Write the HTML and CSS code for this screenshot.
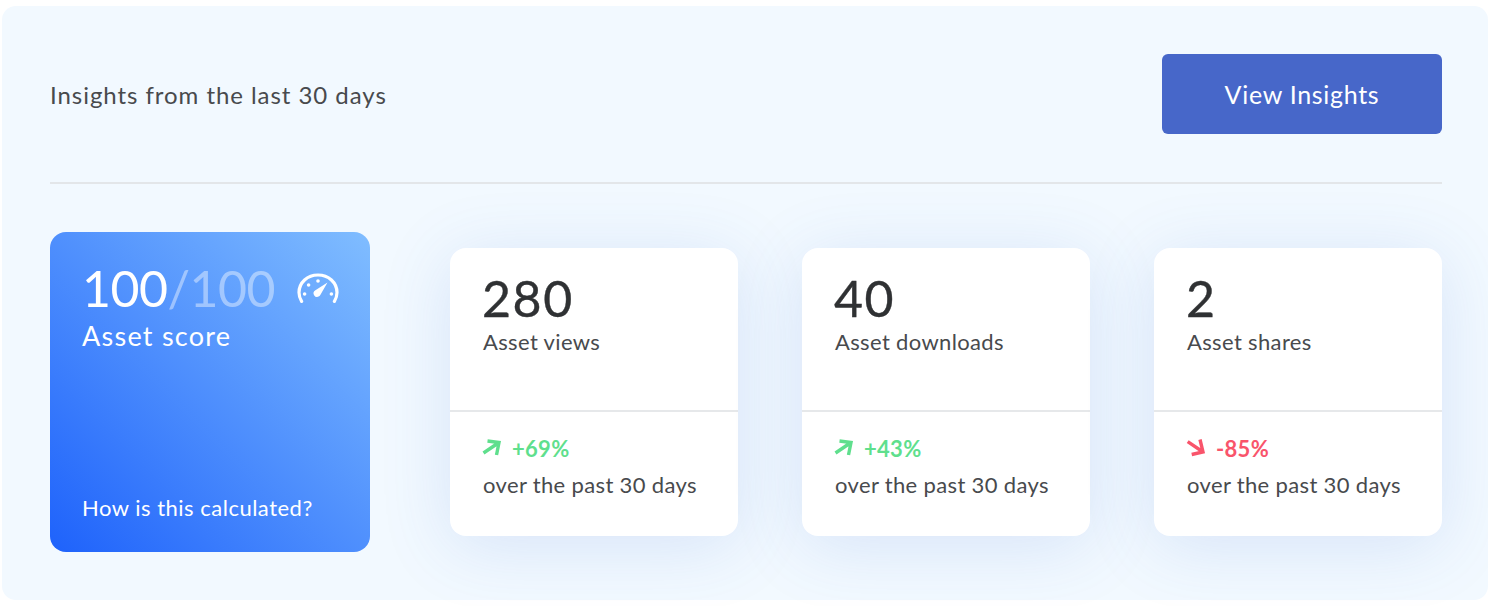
FILE: index.html
```html
<!DOCTYPE html>
<html lang="en">
  <head>
    <meta charset="UTF-8" />
    <meta name="viewport" content="width=device-width, initial-scale=1.0" />
    <title>Insights</title>
    <link rel="stylesheet" href="styles.css">
  </head>
  <body>
    <div class="panel">

      <div class="top-row">
        <p class="top-title">Insights from the last 30 days</p>
        <button class="view-but">View Insights</button>
      </div>

      <div class="cards-row">

        <div class="score-card">
          <div class="score-line">
            <span class="score-num">100<span class="score-fade">/100</span></span>
            <svg class="gauge-icon" viewBox="0 0 42 30" fill="none">
              <path d="M4.600 28.400C2.900 25.600 2 22.600 2 19.600 2 9.600 10.500 2 21 2s19 7.600 19 17.600c0 3-.9 6-2.600 8.800" stroke="#fff" stroke-width="3.200" stroke-linecap="round"/>
              <path d="M30.500 9.600 18.400 17.300a3.600 3.600 0 0 0 -1.300 4.900 3.600 3.600 0 0 0 5 1.100 3.600 3.600 0 0 0 1.200 -1.200z" fill="#fff"/>
              <circle cx="21" cy="8" r="1.800" fill="#fff"/>
              <circle cx="11.600" cy="12" r="1.800" fill="#fff"/>
              <circle cx="7.600" cy="21" r="1.800" fill="#fff"/>
              <circle cx="34.400" cy="21" r="1.800" fill="#fff"/>
            </svg>
          </div>
          <p class="score-label">Asset score</p>
          <p class="score-link">How is this calculated?</p>
        </div>

        <div class="stat-card">
          <div class="stat-top">
            <p class="stat-num">280</p>
            <p class="stat-label">Asset views</p>
          </div>
          <div class="stat-bottom">
            <p class="change up">
              <svg class="arrow-icon" viewBox="0 0 20 18" fill="none"><path d="M1.500 14 17 3.500M5.500 2 17 3.500 14.500 16" stroke="#5fdf8d" stroke-width="3.400"/></svg>
              +69%
            </p>
            <p class="stat-label">over the past 30 days</p>
          </div>
        </div>

        <div class="stat-card">
          <div class="stat-top">
            <p class="stat-num">40</p>
            <p class="stat-label">Asset downloads</p>
          </div>
          <div class="stat-bottom">
            <p class="change up">
              <svg class="arrow-icon" viewBox="0 0 20 18" fill="none"><path d="M1.500 14 17 3.500M5.500 2 17 3.500 14.500 16" stroke="#5fdf8d" stroke-width="3.400"/></svg>
              +43%
            </p>
            <p class="stat-label">over the past 30 days</p>
          </div>
        </div>

        <div class="stat-card">
          <div class="stat-top">
            <p class="stat-num">2</p>
            <p class="stat-label">Asset shares</p>
          </div>
          <div class="stat-bottom">
            <p class="change down">
              <svg class="arrow-icon" viewBox="0 0 20 18" fill="none"><path d="M1.700 2.700 17 13M14 .5 17 13 5.700 15.500" stroke="#f9546b" stroke-width="3.400"/></svg>
              -85%
            </p>
            <p class="stat-label">over the past 30 days</p>
          </div>
        </div>

      </div>
    </div>
  </body>
</html>
```

FILE: styles.css
```css
body{
  margin: 0;
  height: 606px;
  overflow: hidden;
  background-color: white;
  font-family: "Lato", "Liberation Sans", sans-serif;
  color: #484a4d;
}
p{
  margin: 0;
}
.panel{
  box-sizing: border-box;
  margin: 6px 0 0 2px;
  height: 594px;
  padding: 48px 46px 0 48px;
  background-color: #f2f9ff;
  border-radius: 14px;
}
.top-row{
  display: flex;
  justify-content: space-between;
  align-items: center;
  padding-bottom: 49px;
  box-sizing: border-box;
  height: 130px;
  border-bottom: 2px solid #e3e6e9;
}
.top-title{
  font-size: 24px;
  letter-spacing: 0.95px;
  padding-top: 2px;
}
.view-but{
  width: 280px;
  height: 80px;
  border: none;
  border-radius: 6px;
  background-color: #4767c9;
  color: white;
  font-family: inherit;
  font-size: 25px;
  letter-spacing: 0.7px;
}
.cards-row{
  display: flex;
  align-items: center;
  margin-top: 48px;
}
.score-card{
  box-sizing: border-box;
  display: flex;
  flex-direction: column;
  width: 320px;
  height: 320px;
  margin-right: 80px;
  padding: 26px 31px 31px 32px;
  border-radius: 16px;
  background: linear-gradient(to top right, #1e62fb 0%, #80bdff 100%);
  color: white;
}
.score-line{
  display: flex;
  align-items: center;
  justify-content: space-between;
}
.score-num{
  font-size: 50px;
  line-height: 60px;
  letter-spacing: -0.5px;
}
.score-fade{
  color: rgba(255, 255, 255, 0.42);
}
.gauge-icon{
  width: 42px;
  height: 30px;
}
.score-label{
  font-size: 27px;
  letter-spacing: 1.25px;
  line-height: 36px;
}
.score-link{
  margin-top: auto;
  font-size: 22px;
  letter-spacing: 0.5px;
}
.stat-card{
  box-sizing: border-box;
  width: 288px;
  height: 288px;
  margin-right: 64px;
  background-color: white;
  border-radius: 16px;
  box-shadow: 0 10px 70px rgba(60, 110, 210, 0.15);
}
.stat-card:last-child{
  margin-right: 0;
}
.stat-top{
  box-sizing: border-box;
  height: 164px;
  padding: 20px 32px 0 33px;
  border-bottom: 2px solid #e6e8ea;
}
.stat-num{
  font-size: 50px;
  line-height: 60px;
  color: #2f3133;
  letter-spacing: 1.6px;
  margin-left: -1px;
  -webkit-text-stroke: 0.4px #2f3133;
}
.stat-label{
  font-size: 22px;
  letter-spacing: 0.35px;
  line-height: 30px;
  margin-top: -1px;
}
.stat-bottom{
  padding: 21px 32px 0 33px;
}
.change{
  display: flex;
  align-items: center;
  gap: 10px;
  height: 30px;
  margin-bottom: 8px;
  margin-left: -1px;
  font-size: 22px;
  font-weight: 700;
  letter-spacing: 0.3px;
}
.up{
  color: #5fdf8d;
}
.down{
  color: #f9546b;
}
.arrow-icon{
  width: 20px;
  height: 18px;
}
```
